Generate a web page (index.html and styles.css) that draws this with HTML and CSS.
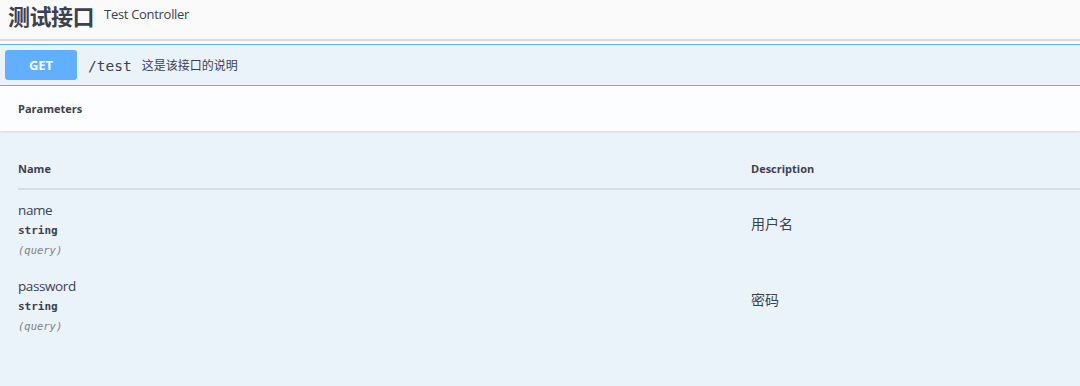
FILE: index.html
```html
<!DOCTYPE html>
<html lang="zh">
<head>
    <meta charset="UTF-8">
    <meta name="viewport" content="width=device-width, initial-scale=1.0">
    <title>测试接口</title>

    <link rel="stylesheet" href="styles.css">

</head>
<body>

    <h4 class="tag">
        <span class="tag-name">测试接口</span>
        <small class="tag-desc">Test Controller</small>
    </h4>

    <div class="opblock">
        <div class="summary">
            <span class="method">GET</span>
            <span class="path">/test</span>
            <span class="summary-desc">这是该接口的说明</span>
        </div>

        <div class="section-header">
            <h4 class="section-title">Parameters</h4>
        </div>

        <div class="params">
            <table class="params-table">
                <thead>
                    <tr>
                        <th class="col-name">Name</th>
                        <th class="col-desc">Description</th>
                    </tr>
                </thead>
                <tbody>
                    <tr>
                        <td class="col-name">
                            <div class="param-name">name</div>
                            <div class="param-type">string</div>
                            <div class="param-in">(query)</div>
                        </td>
                        <td class="col-desc">用户名</td>
                    </tr>
                    <tr>
                        <td class="col-name">
                            <div class="param-name">password</div>
                            <div class="param-type">string</div>
                            <div class="param-in">(query)</div>
                        </td>
                        <td class="col-desc">密码</td>
                    </tr>
                </tbody>
            </table>
        </div>
    </div>

</body>
</html>
```

FILE: styles.css
```css
body{
    margin: 0;
    padding: 0;
    background: #fafafa;
    color: #3b4151;
    font-family: "Open Sans", "Noto Sans CJK SC", sans-serif;
    --blue: #61affe;
}

.tag{
    margin: 0;
    height: 30px;
    padding: 0 8px 9px;
    display: flex;
    align-items: center;
    border-bottom: 2px solid #d9dadc;
    font-weight: normal;
}

.tag-name{
    font-size: 22px;
    font-weight: bold;
    letter-spacing: -0.5px;
}

.tag-desc{
    font-size: 13px;
    margin-left: 10px;
    margin-top: -2px;
    letter-spacing: -0.3px;
}

.opblock{
    margin-top: 3px;
    border-top: 1px solid var(--blue);
    background: #ebf3fa;
}

.summary{
    display: flex;
    align-items: center;
    padding: 5px;
    border-bottom: 1px solid var(--blue);
}

.method{
    width: 72px;
    height: 30px;
    line-height: 30px;
    text-align: center;
    background: var(--blue);
    color: white;
    border-radius: 3px;
    font-size: 13px;
    font-weight: bold;
}

.path{
    font-family: "DejaVu Sans Mono", monospace;
    font-size: 14.5px;
    margin-left: 11px;
    padding-top: 1px;
}

.summary-desc{
    font-size: 12px;
    margin-left: 10px;
}

.section-header{
    height: 45px;
    display: flex;
    align-items: center;
    padding: 0 18px;
    background: #fbfdfe;
    box-shadow: 0 1px 2px rgba(0, 0, 0, 0.1);
}

.section-title{
    margin: 0;
    font-size: 11px;
    font-weight: bold;
}

.params{
    padding: 19px 0 44px 18px;
}

.params-table{
    width: 100%;
    border-collapse: collapse;
}

.params-table th{
    text-align: left;
    font-size: 11px;
    font-weight: bold;
    padding: 11px 0 12px;
    border-bottom: 2px solid #d8dee6;
}

.col-name{
    width: 733px;
}

.params-table td{
    vertical-align: top;
    padding: 10px 0 8px;
}

.params-table td.col-desc{
    padding-top: 23px;
    font-size: 14px;
    line-height: 22px;
}

.param-name{
    font-size: 13.5px;
    line-height: 20px;
    letter-spacing: -0.4px;
}

.param-type{
    font-family: "DejaVu Sans Mono", monospace;
    font-size: 11px;
    font-weight: 600;
    line-height: 22px;
}

.param-in{
    font-family: "DejaVu Sans Mono", monospace;
    font-size: 10.5px;
    font-style: italic;
    color: #808080;
    line-height: 16px;
}
```
